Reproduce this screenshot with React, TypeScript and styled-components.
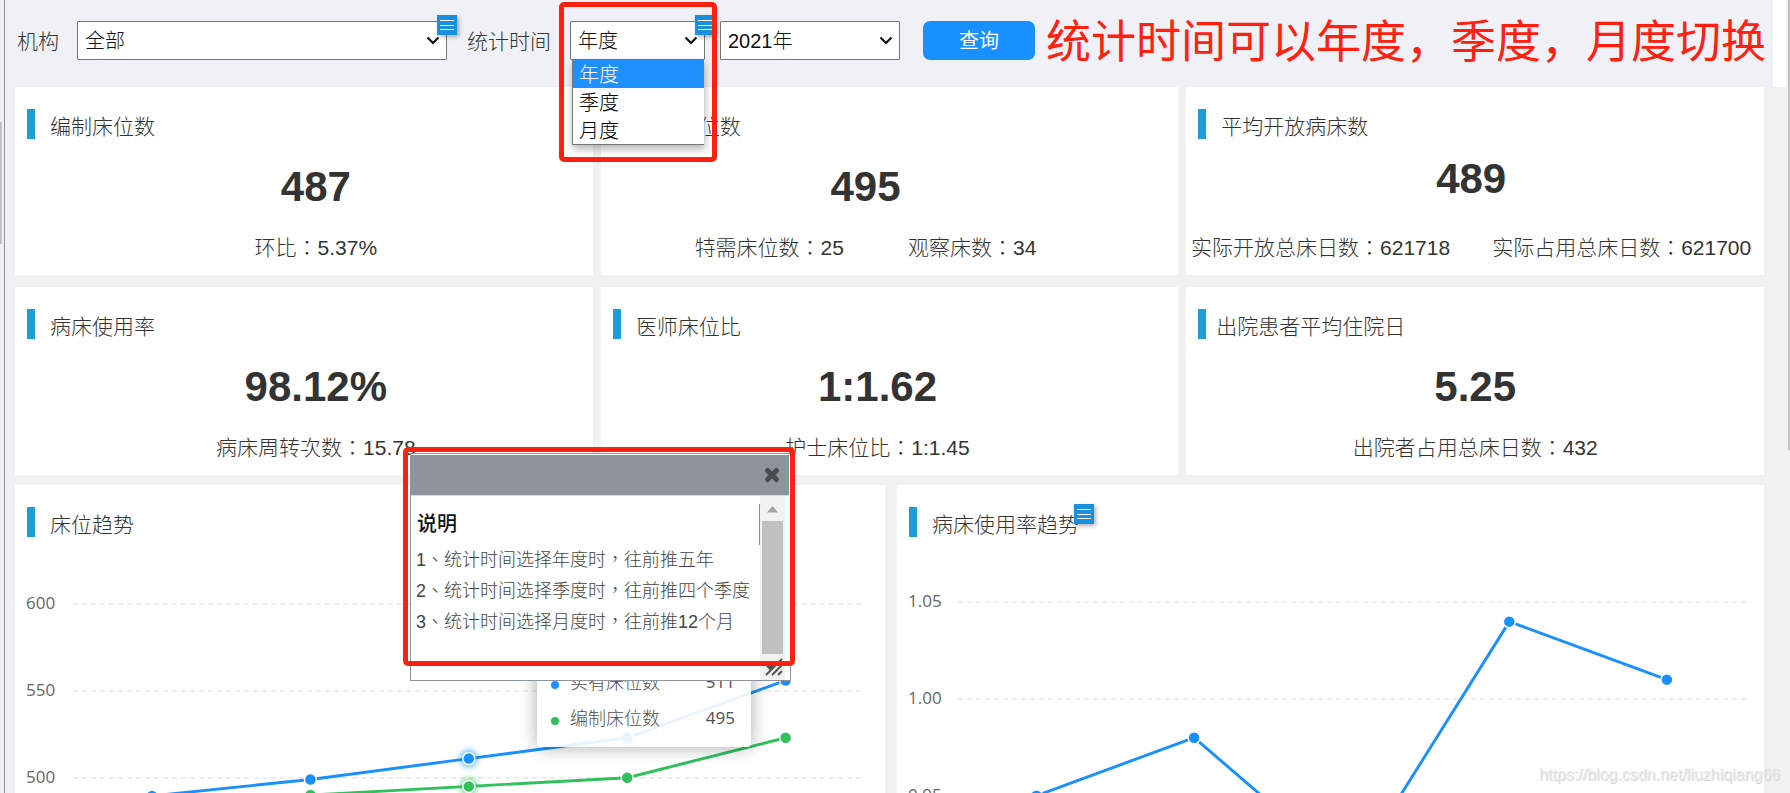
import React from 'react';
import styled, { createGlobalStyle } from 'styled-components';

const sans = '"Liberation Sans", "Noto Sans CJK TC", sans-serif';
const ui = '"Liberation Sans", "Noto Sans CJK SC", sans-serif';
const axis = '"Open Sans", "Noto Sans CJK SC", sans-serif';

const GlobalStyle = createGlobalStyle`
  *, *::before, *::after { box-sizing: border-box; }
  body { margin: 0; background: #f1f1f1; font-family: ${ui}; font-weight: 300; color: #333; }
  h2, p, ul { margin: 0; padding: 0; font-weight: inherit; }
`;

/* ---------- page frame ---------- */

const Shell = styled.div`
  position: relative;
  display: flex;
  height: 100vh;
  overflow: hidden;
`;

const LeftEdge = styled.div`
  width: 5px;
  flex: none;
  padding-top: 122px;
  background: #f0f0f1;
  border-right: 1px solid #8f9399;
`;

const RightEdge = styled.div`
  width: 4px;
  flex: none;
  padding-left: 2px;
  background: #f1f1f1;
`;

const Thumb = styled.div<{ $width: number; $height: number }>`
  width: ${p => p.$width}px;
  height: ${p => p.$height}px;
  background: #c1c1c1;
`;

const Main = styled.main`
  flex: 1;
  min-width: 0;
  display: flex;
  flex-direction: column;
`;

/* ---------- filter bar ---------- */

const FilterBar = styled.form`
  position: relative;
  z-index: 2;
  flex: none;
  display: flex;
  align-items: flex-start;
  height: 87px;
  padding: 21px 0 0 12px;
  background: #f0f1f6;
  border-right: 13px solid #fff;
`;

const Label = styled.label<{ $gap: number }>`
  margin-right: ${p => p.$gap}px;
  font-size: 21px;
  line-height: 42px;
  white-space: nowrap;
`;

const Field = styled.div<{ $width: number; $gap: number }>`
  position: relative;
  flex: none;
  width: ${p => p.$width}px;
  margin-right: ${p => p.$gap}px;
`;

const Select = styled.select`
  display: block;
  width: 100%;
  height: 39px;
  padding: 0 28px 0 7px;
  appearance: none;
  border: 1px solid #767676;
  border-radius: 1px;
  background: #fff;
  color: #111;
  font: 300 20px/36px ${ui};
`;

const Arrow = styled.svg`
  position: absolute;
  top: 15px;
  right: 7px;
  width: 14px;
  height: 9px;
  pointer-events: none;
`;

const BadgeButton = styled.button<{ $top: number; $right: number }>`
  position: absolute;
  top: ${p => p.$top}px;
  right: ${p => p.$right}px;
  width: 20px;
  height: 20px;
  padding: 0;
  border: 0;
  background: #1890e0;
  box-shadow: 2px 2px 4px rgba(0, 0, 0, 0.3);
  svg { display: block; }
`;

const OptionList = styled.ul`
  position: absolute;
  top: 38px;
  left: 2px;
  right: 1px;
  list-style: none;
  background: #fff;
  border: 1px solid #767676;
  border-right: 0;
  box-shadow: 1px 4px 8px rgba(0, 0, 0, 0.3);
`;

const Option = styled.li<{ $active?: boolean }>`
  height: 28px;
  padding-left: 6px;
  font-size: 20px;
  line-height: 30px;
  color: ${p => (p.$active ? '#fff' : '#000')};
  background: ${p => (p.$active ? '#1e90ff' : '#fff')};
`;

const QueryButton = styled.button`
  flex: none;
  width: 112px;
  height: 39px;
  padding: 0;
  border: 0;
  border-radius: 7px;
  background: #1890ff;
  color: #fff;
  font: 400 20px/38px ${ui};
`;

const Remark = styled.p`
  margin-left: 11px;
  font-size: 45px;
  line-height: 44px;
  font-weight: 400;
  color: #ff2010;
  white-space: nowrap;
`;

const Highlight = styled.div<{ $box: [number, number, number, number] }>`
  position: absolute;
  left: ${p => p.$box[0]}px;
  top: ${p => p.$box[1]}px;
  width: ${p => p.$box[2]}px;
  height: ${p => p.$box[3]}px;
  border: 5px solid #ff2010;
  border-radius: 5px;
  pointer-events: none;
`;

/* ---------- cards ---------- */

const Board = styled.div`
  flex: 1;
  min-height: 0;
  display: flex;
  flex-direction: column;
  gap: 10px;
  padding-right: 22px;
  border-left: 10px solid #f0f1f6;
  background: #f1f1f1;
`;

const StatGrid = styled.section`
  flex: none;
  display: grid;
  grid-template-columns: repeat(3, minmax(0, 1fr));
  gap: 12px 8px;
`;

const ChartGrid = styled.section`
  flex: 1;
  min-height: 0;
  display: grid;
  grid-template-columns: 870fr 867fr;
  gap: 12px;
`;

const Card = styled.article`
  min-width: 0;
  min-height: 0;
  padding: 22px 0 12px;
  background: #fff;
`;

const CardHead = styled.header<{ $tight?: boolean }>`
  display: flex;
  height: 36px;
  padding-left: 12px;
  gap: ${p => (p.$tight ? 10 : 15)}px;
  &::before {
    content: '';
    width: 8px;
    height: 30px;
    background: #1b9fdb;
  }
`;

const CardTitle = styled.h2`
  position: relative;
  font-family: ${sans};
  font-size: 21px;
  line-height: 36px;
  white-space: nowrap;
`;

type Space = { lead?: number; trail?: number };

const CardBody = styled.div<{ $space: Space; $raised?: boolean }>`
  display: flex;
  flex-direction: column;
  align-items: center;
  gap: ${p => (p.$raised ? 30 : 22)}px;
  padding: ${p => (p.$raised ? 10 : 18)}px ${p => p.$space.trail ?? 0}px 0 ${p => p.$space.lead ?? 0}px;
  font-family: ${sans};
`;

const Value = styled.strong`
  font-size: 42px;
  line-height: 48px;
  font-weight: 700;
`;

const Details = styled.p<{ $narrow?: boolean }>`
  display: flex;
  gap: ${p => (p.$narrow ? 42 : 64)}px;
  font-size: 21px;
  line-height: 30px;
  white-space: nowrap;
`;

/* ---------- charts ---------- */

const ChartArea = styled.div`
  position: relative;
`;

const ChartSvg = styled.svg`
  display: block;
  width: 100%;
  height: auto;
  text {
    font: 400 17px ${axis};
    fill: #666;
  }
`;

const ChartTip = styled.div`
  position: absolute;
  top: 110px;
  left: 60%;
  width: 214px;
  padding: 11px 16px 11px 14px;
  border-radius: 4px;
  background: rgba(255, 255, 255, 0.9);
  box-shadow: 0 0 18px rgba(0, 0, 0, 0.35);
  font-family: ${axis};
  color: #505050;
`;

const TipRow = styled.div<{ $color: string }>`
  display: flex;
  align-items: center;
  font-size: 18px;
  line-height: 36px;
  &::before {
    content: '';
    width: 8px;
    height: 8px;
    margin: 5px 11px 0 0;
    border-radius: 50%;
    background: ${p => p.$color};
  }
  span:last-child {
    margin-left: auto;
    font-size: 17px;
    font-weight: 400;
  }
`;

/* ---------- explanation window ---------- */

const Dialog = styled.section`
  position: absolute;
  z-index: 3;
  left: 410px;
  top: 453px;
  width: 381px;
  height: 228px;
  display: flex;
  flex-direction: column;
  padding-top: 1px;
  border: 1px solid #8f939b;
  background: #fff;
`;

const DialogBar = styled.header`
  flex: none;
  display: flex;
  align-items: center;
  justify-content: flex-end;
  height: 41px;
  margin-right: 1px;
  padding-right: 8px;
  background: #8f939b;
  border-bottom: 1px solid #d8d8dc;
`;

const CloseButton = styled.button`
  width: 18px;
  height: 18px;
  padding: 0;
  border: 0;
  background: none;
  svg { display: block; }
`;

const DialogBody = styled.div`
  flex: 1;
  min-height: 0;
  display: flex;
  padding-right: 5px;
`;

const DialogText = styled.div`
  flex: 1;
  padding: 10px 0 0 5px;
  font-family: ${sans};
  font-size: 18px;
  line-height: 31px;
  color: #444;
  white-space: nowrap;
  h2 {
    padding: 3px 0 5px 1px;
    font: 500 20px/31px ${ui};
    color: #111;
  }
`;

const DialogRule = styled.div`
  width: 1px;
  height: 41px;
  margin-top: 8px;
  background: #8a8d91;
`;

const ScrollTrack = styled.div`
  width: 25px;
  display: flex;
  flex-direction: column;
  align-items: center;
  justify-content: space-between;
  background: #f1f1f1;
  padding: 10px 0 4px;
  svg { display: block; }
`;

const Watermark = styled.p`
  position: absolute;
  z-index: 1;
  right: 10px;
  bottom: 6px;
  font: 400 16px/24px ${ui};
  color: #ebebeb;
  text-shadow: 1px 1px 1px #d0d0d0;
`;

/* ---------- pieces ---------- */

const MenuBadge = ({ top, right, name }: { top: number; right: number; name: string }) => (
  <BadgeButton type="button" $top={top} $right={right} aria-label={name}>
    <svg width="20" height="20" viewBox="0 0 20 20">
      <path d="M3 5.5h14M3 10.5h14M3 14.5h14" stroke="#fff" strokeWidth="1" />
    </svg>
  </BadgeButton>
);

const Chevron = () => (
  <Arrow viewBox="0 0 14 9" aria-hidden>
    <path d="M1.5 1.5 7 7l5.500-5.500" fill="none" stroke="#111" strokeWidth="2.200" />
  </Arrow>
);

interface Stat {
  title: string;
  value: string;
  details: string[];
  space: Space;
  raised?: boolean;
  tight?: boolean;
}

const stats: Stat[] = [
  { title: '编制床位数', value: '487', details: ['环比：5.37%'], space: { lead: 24 } },
  { title: '实有床位数', value: '495', details: ['特需床位数：25', '观察床数：34'], space: { trail: 48 } },
  {
    title: '平均开放病床数',
    value: '489',
    details: ['实际开放总床日数：621718', '实际占用总床日数：621700'],
    space: { trail: 8 },
    raised: true,
  },
  { title: '病床使用率', value: '98.12%', details: ['病床周转次数：15.78'], space: { lead: 24 } },
  { title: '医师床位比', value: '1:1.62', details: ['护士床位比：1:1.45'], space: { trail: 24 } },
  { title: '出院患者平均住院日', value: '5.25', details: ['出院者占用总床日数：432'], space: {}, tight: true },
];

interface Series {
  color: string;
  values: number[];
}

interface ChartProps {
  width: number;
  labelX: number;
  gridFrom: number;
  gridTo: number;
  ticks: { label: string; value: number }[];
  firstX: number;
  stepX: number;
  toY: (v: number) => number;
  series: Series[];
  active?: number;
}

const LineChart = (c: ChartProps) => (
  <ChartSvg viewBox={`0 0 ${c.width} 340`}>
    <defs>
      <filter id="glow" x="-150%" y="-150%" width="400%" height="400%">
        <feGaussianBlur stdDeviation="3" />
      </filter>
    </defs>
    {c.ticks.map(t => (
      <g key={t.label}>
        <text x={c.labelX} y={c.toY(t.value) + 5}>{t.label}</text>
        <line
          x1={c.gridFrom} x2={c.gridTo} y1={c.toY(t.value)} y2={c.toY(t.value)}
          stroke="#e8e8e8" strokeWidth="1.500" strokeDasharray="5 4"
        />
      </g>
    ))}
    {c.series.map(s => {
      const pts = s.values.map((v, i) => [c.firstX + i * c.stepX, c.toY(v)]);
      return (
        <g key={s.color}>
          <polyline points={pts.map(p => p.join(',')).join(' ')} fill="none" stroke={s.color} strokeWidth="2.900" />
          {pts.map(([x, y], i) => (
            <g key={i}>
              {i === c.active && <circle cx={x} cy={y} r="8" fill={s.color} opacity="0.8" filter="url(#glow)" />}
              <circle cx={x} cy={y} r="6" fill={s.color} stroke="#fff" strokeWidth="1.500" />
            </g>
          ))}
        </g>
      );
    })}
  </ChartSvg>
);

export default function App() {
  return (
    <>
      <GlobalStyle />
      <Shell>
        <LeftEdge><Thumb $width={2} $height={122} /></LeftEdge>
        <Main>
          <FilterBar onSubmit={e => e.preventDefault()}>
            <Label htmlFor="org" $gap={18}>机构</Label>
            <Field $width={370} $gap={20}>
              <Select id="org"><option>全部</option></Select>
              <Chevron />
              <MenuBadge top={-6} right={-10} name="机构设置" />
            </Field>
            <Label htmlFor="period" $gap={19}>统计时间</Label>
            <Field $width={135} $gap={15}>
              <Select id="period" defaultValue="年度">
                <option>年度</option>
                <option>季度</option>
                <option>月度</option>
              </Select>
              <Chevron />
              <MenuBadge top={-6} right={-10} name="统计时间设置" />
              <OptionList role="listbox" aria-label="统计时间">
                <Option role="option" aria-selected $active>年度</Option>
                <Option role="option" aria-selected={false}>季度</Option>
                <Option role="option" aria-selected={false}>月度</Option>
              </OptionList>
              <Highlight $box={[-11, -19, 158, 160]} />
            </Field>
            <Field $width={180} $gap={23}>
              <Select aria-label="年份"><option>2021年</option></Select>
              <Chevron />
            </Field>
            <QueryButton type="submit">查询</QueryButton>
            <Remark>统计时间可以年度，季度，月度切换</Remark>
          </FilterBar>

          <Board>
            <StatGrid>
              {stats.map(s => (
                <Card key={s.title}>
                  <CardHead $tight={s.tight}><CardTitle>{s.title}</CardTitle></CardHead>
                  <CardBody $space={s.space} $raised={s.raised}>
                    <Value>{s.value}</Value>
                    <Details $narrow={s.raised}>
                      {s.details.map(d => <span key={d}>{d}</span>)}
                    </Details>
                  </CardBody>
                </Card>
              ))}
            </StatGrid>

            <ChartGrid>
              <Card>
                <CardHead><CardTitle>床位趋势</CardTitle></CardHead>
                <ChartArea>
                  <LineChart
                    width={870} labelX={11} gridFrom={58} gridTo={846}
                    ticks={[{ label: '600', value: 600 }, { label: '550', value: 550 }, { label: '500', value: 500 }]}
                    firstX={137} stepX={158.4}
                    toY={v => 234.7 - (v - 500) * 1.736}
                    series={[
                      { color: '#1890ff', values: [489.5, 499, 511, 523, 556] },
                      { color: '#2fc25b', values: [480, 490, 495, 500, 523] },
                    ]}
                    active={2}
                  />
                  <ChartTip>
                    <TipRow $color="#1890ff"><span>实有床位数</span><span>511</span></TipRow>
                    <TipRow $color="#2fc25b"><span>编制床位数</span><span>495</span></TipRow>
                  </ChartTip>
                </ChartArea>
              </Card>
              <Card>
                <CardHead>
                  <CardTitle>
                    病床使用率趋势
                    <MenuBadge top={-3} right={-15} name="趋势设置" />
                  </CardTitle>
                </CardHead>
                <ChartArea>
                  <LineChart
                    width={867} labelX={11} gridFrom={61} gridTo={849}
                    ticks={[{ label: '1.05', value: 1.05 }, { label: '1.00', value: 1 }, { label: '0.95', value: 0.95 }]}
                    firstX={139.5} stepX={157.6}
                    toY={v => 156 - (v - 1) * 1934}
                    series={[{ color: '#1890ff', values: [0.95, 0.98, 0.91, 1.04, 1.01] }]}
                  />
                </ChartArea>
              </Card>
            </ChartGrid>
          </Board>
        </Main>
        <RightEdge><Thumb $width={2} $height={450} /></RightEdge>

        <Dialog aria-label="说明">
          <DialogBar>
            <CloseButton type="button" aria-label="关闭">
              <svg width="18" height="18" viewBox="0 0 18 18">
                <path d="M4.500 4.500l9 9M13.500 4.500l-9 9" stroke="#484b4b" strokeWidth="5" strokeLinecap="round" />
              </svg>
            </CloseButton>
          </DialogBar>
          <DialogBody>
            <DialogText>
              <h2>说明</h2>
              <p>1、统计时间选择年度时，往前推五年</p>
              <p>2、统计时间选择季度时，往前推四个季度</p>
              <p>3、统计时间选择月度时，往前推12个月</p>
            </DialogText>
            <DialogRule />
            <ScrollTrack>
              <svg width="21" height="148" viewBox="0 0 21 148">
                <path d="M5 6.500 10.500 0 16 6.500z" fill="#a3a3a3" />
                <path d="M0 15h21v133H0z" fill="#c1c1c1" />
              </svg>
              <svg width="21" height="18" viewBox="0 0 21 18">
                <path d="M4 8h9l-4.500 5z" fill="#505050" />
                <path d="M4 17 20 1M10 17 20 7M16 17l4-4" stroke="#555" strokeWidth="2" />
              </svg>
            </ScrollTrack>
          </DialogBody>
          <Highlight $box={[-8, -7, 392, 219]} />
        </Dialog>
        <Watermark>https://blog.csdn.net/liuzhiqiang66</Watermark>
      </Shell>
    </>
  );
}
